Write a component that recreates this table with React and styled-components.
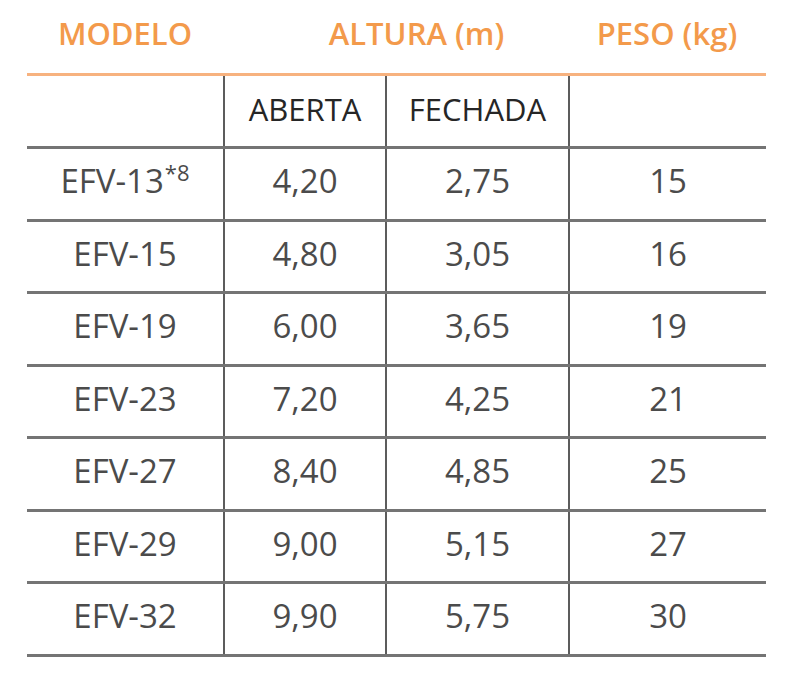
import React from 'react';
import styled, { createGlobalStyle } from 'styled-components';

const GlobalStyle = createGlobalStyle`
  html, body {
    margin: 0;
    padding: 0;
    background: #ffffff;
  }
  body {
    font-family: "Open Sans", "Liberation Sans", sans-serif;
  }
`;

const COLS = '196px 162px 183px 198px';

const Wrapper = styled.div`
  width: 800px;
  height: 674px;
  padding-left: 27px;
  box-sizing: border-box;
  overflow: hidden;
`;

const TitleRow = styled.div`
  display: grid;
  grid-template-columns: ${COLS};
  height: 73px;
  align-items: center;
`;

const Title = styled.div`
  grid-column: ${(p) => p.span || 'auto'};
  text-align: center;
  padding-left: ${(p) => p.shift || 0}px;
  color: #f39a4b;
  font-size: 31px;
  font-weight: 600;
  line-height: 1;
  margin-top: -7px;
`;

const Table = styled.div`
  width: 739px;
  border-top: 3px solid #f7b27f;
`;

const Row = styled.div`
  display: grid;
  grid-template-columns: ${COLS};
  height: ${(p) => p.h}px;
  border-bottom: 3px solid #747474;
  box-sizing: border-box;
`;

const Cell = styled.div`
  display: flex;
  align-items: center;
  justify-content: center;
  border-left: ${(p) => (p.first ? 'none' : '2px solid #5c5c5c')};
  color: ${(p) => (p.head ? '#262626' : '#4b4b4b')};
  font-size: ${(p) => (p.head ? 31 : 33)}px;
  line-height: 1;
  padding-bottom: ${(p) => (p.head ? 4 : 7)}px;
`;

const Sup = styled.sup`
  font-size: 22px;
  vertical-align: 0;
  position: relative;
  top: -9px;
  margin-left: 1px;
`;

const rows = [
  ['EFV-13', '4,20', '2,75', '15', '*8'],
  ['EFV-15', '4,80', '3,05', '16'],
  ['EFV-19', '6,00', '3,65', '19'],
  ['EFV-23', '7,20', '4,25', '21'],
  ['EFV-27', '8,40', '4,85', '25'],
  ['EFV-29', '9,00', '5,15', '27'],
  ['EFV-32', '9,90', '5,75', '30'],
];

function App() {
  return (
    <Wrapper>
      <GlobalStyle />
      <TitleRow>
        <Title>MODELO</Title>
        <Title span="span 2" shift={42}>ALTURA (m)</Title>
        <Title>PESO (kg)</Title>
      </TitleRow>
      <Table>
        <Row h={73}>
          <Cell first head />
          <Cell head>ABERTA</Cell>
          <Cell head>FECHADA</Cell>
          <Cell />
        </Row>
        {rows.map((r, i) => (
          <Row key={r[0]} h={i % 2 === 0 ? 73 : 72}>
            <Cell first>
              {r[0]}
              {r[4] && <Sup>{r[4]}</Sup>}
            </Cell>
            <Cell>{r[1]}</Cell>
            <Cell>{r[2]}</Cell>
            <Cell>{r[3]}</Cell>
          </Row>
        ))}
      </Table>
    </Wrapper>
  );
}

export default App;
